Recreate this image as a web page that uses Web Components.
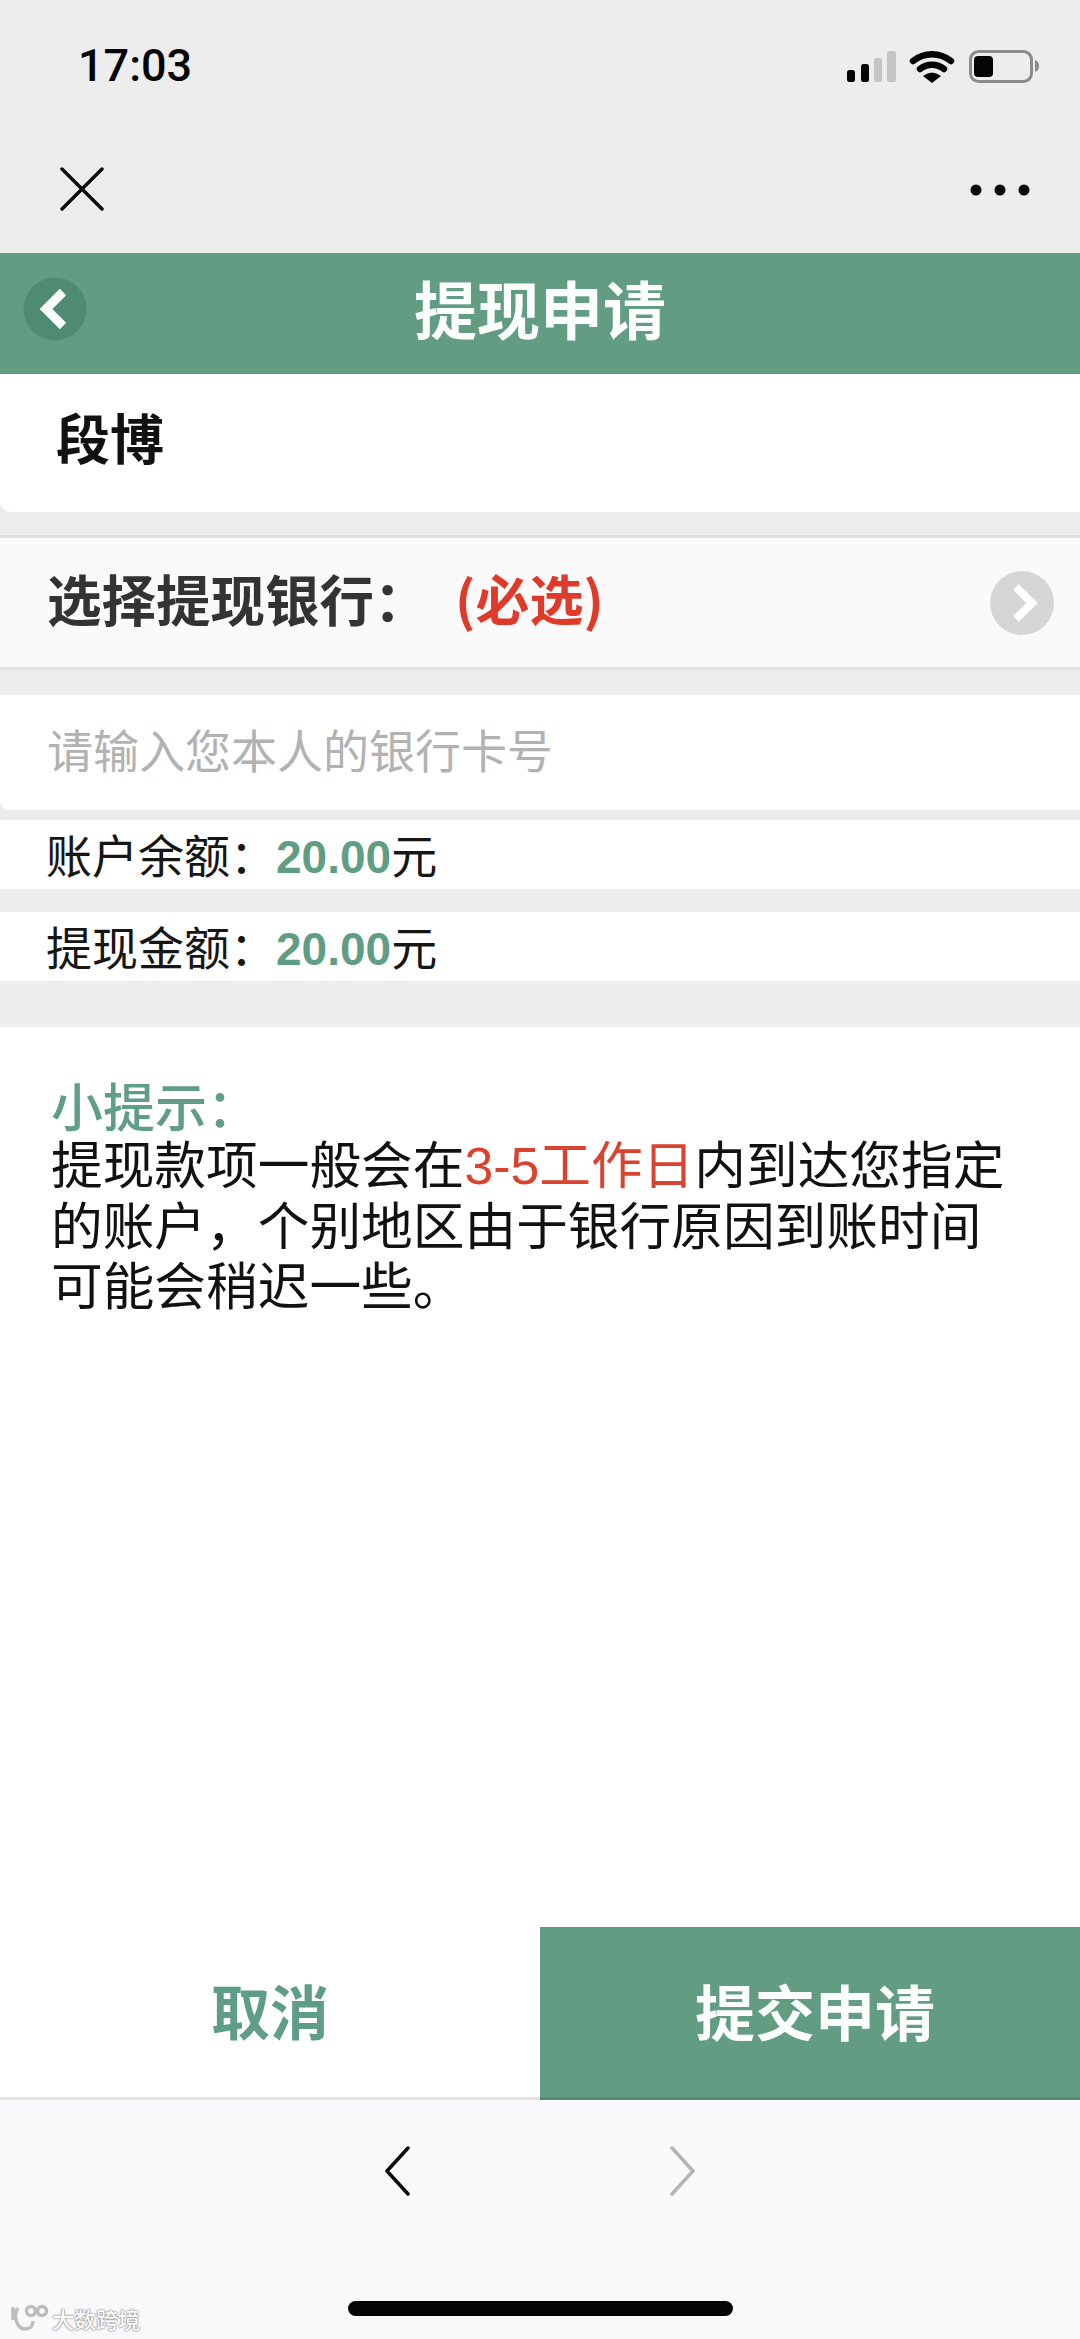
<!DOCTYPE html>
<html lang="zh">
<head>
<meta charset="utf-8">
<title>提现申请</title>
<style>
  html, body { margin: 0; padding: 0; }
  body {
    width: 1080px;
    height: 2339px;
    overflow: hidden;
    background: #ececec;
    font-family: "Liberation Sans", "Noto Sans CJK SC", sans-serif;
    display: flex;
    flex-direction: column;
  }
</style>
</head>
<body>
  <phone-status time="17:03"></phone-status>
  <wechat-nav></wechat-nav>
  <app-header>提现申请</app-header>
  <name-row>段博</name-row>
  <bank-select label="选择提现银行：" hint="(必选)"></bank-select>
  <card-input placeholder="请输入您本人的银行卡号"></card-input>
  <amount-row label="账户余额：" value="20.00" style="margin-top: 10px"></amount-row>
  <amount-row label="提现金额：" value="20.00" style="margin-top: 23px"></amount-row>
  <tip-box title="小提示：">提现款项一般会在<em>3-5工作日</em>内到达您指定的账户，个别地区由于银行原因到账时间可能会稍迟一些。</tip-box>
  <action-bar cancel="取消" submit="提交申请"></action-bar>
  <browser-bar></browser-bar>

<script>
// small helper so every element sets up its shadow root the same way
class BaseEl extends HTMLElement {
    constructor(html) {
        super();
        this.attachShadow({ mode: 'open' });
        const template = document.createElement('template');
        template.innerHTML = html;
        this.shadowRoot.appendChild(template.content.cloneNode(true));
    }
    attr(name, fallback) {
        return this.hasAttribute(name) ? this.getAttribute(name) : fallback;
    }
}

class PhoneStatus extends BaseEl {
    constructor() {
        super(`
            <style>
                :host { display: flex; height: 133px; background: #eeeded; justify-content: space-between; align-items: flex-start; padding: 0 40px 0 78px; box-sizing: border-box; }
                .time { font: 500 45px/45px Roboto, "Liberation Sans", sans-serif; color: #050505; margin-top: 43px; }
                svg { margin-top: 50px; display: block; }
            </style>
            <span class="time"></span>
            <svg width="195" height="33" viewBox="0 0 195 33">
                <rect x="2" y="20" width="8" height="12" rx="2.5" fill="#050505"/>
                <rect x="16" y="14" width="8" height="18" rx="2.5" fill="#050505"/>
                <rect x="29" y="8" width="8" height="24" rx="2" fill="#c4c4c4"/>
                <rect x="42" y="1" width="9" height="31" rx="2" fill="#c4c4c4"/>
                <path d="M68 11 A30 30 0 0 1 106 11" fill="none" stroke="#050505" stroke-width="6.5" stroke-linecap="round"/>
                <path d="M75 19 A19 19 0 0 1 99 19" fill="none" stroke="#050505" stroke-width="6.5" stroke-linecap="round"/>
                <path d="M78 26 Q87 19 96 26 L87 33 Z" fill="#050505"/>
                <rect x="125.500" y="1.500" width="61" height="30" rx="8" fill="none" stroke="#8b8b8b" stroke-width="3"/>
                <rect x="129" y="6" width="19" height="21" rx="4" fill="#050505"/>
                <path d="M190 10 C193 11 194 13 194 16 C194 19 193 21 190 22 Z" fill="#8b8b8b"/>
            </svg>
        `);
    }
    connectedCallback() {
        this.shadowRoot.querySelector('.time').textContent = this.attr('time', '');
    }
}

class WechatNav extends BaseEl {
    constructor() {
        super(`
            <style>
                :host { display: flex; height: 120px; background: #eeeded; justify-content: space-between; align-items: center; padding: 0 50px 8px 60px; box-sizing: border-box; }
                svg { display: block; }
                .more { margin-top: 2px; }
            </style>
            <svg width="44" height="44" viewBox="0 0 44 44">
                <path d="M2 2 L42 42 M42 2 L2 42" stroke="#0a0a0a" stroke-width="3.500" stroke-linecap="round"/>
            </svg>
            <svg class="more" width="60" height="12" viewBox="0 0 60 12" fill="#0a0a0a">
                <circle cx="6" cy="6" r="5.500"/><circle cx="30" cy="6" r="5.500"/><circle cx="54" cy="6" r="5.500"/>
            </svg>
        `);
    }
}

class AppHeader extends BaseEl {
    constructor() {
        super(`
            <style>
                :host { display: flex; height: 121px; background: #619c83; color: #fbfefc; align-items: center; justify-content: center; position: relative; }
                .title { font: 700 63px/121px "Noto Sans CJK SC", sans-serif; margin-top: -14px; }
                .back { position: absolute; left: 23px; top: 24px; width: 64px; height: 64px; display: block; }
            </style>
            <svg class="back" viewBox="0 0 64 64">
                <circle cx="32" cy="32" r="31.500" fill="#4f8a73"/>
                <path d="M40 15 L23 32 L40 49" fill="none" stroke="#fbfefc" stroke-width="9" stroke-linejoin="miter"/>
            </svg>
            <span class="title"><slot></slot></span>
        `);
    }
}

class NameRow extends BaseEl {
    constructor() {
        super(`
            <style>
                :host { display: block; height: 138px; background: #fff; padding-left: 56px; box-sizing: border-box; border-bottom-left-radius: 10px; font: 700 54px/125px "Noto Sans CJK SC", sans-serif; color: #111; }
            </style>
            <slot></slot>
        `);
    }
}

class BankSelect extends BaseEl {
    constructor() {
        super(`
            <style>
                :host { display: flex; align-items: center; height: 135px; margin-top: 23px; background: #fafafa; padding-left: 47px; padding-right: 26px; box-sizing: border-box;
                        border-top: 3px solid #dedede; border-bottom: 3px solid #e2e2e2; font: 700 54.500px/1 "Noto Sans CJK SC", sans-serif; color: #333; }
                .label { width: 408px; margin-top: -9px; }
                .hint { color: #e03a2a; flex: 1; margin-top: -9px; font-size: 54px; }
                svg { display: block; }
            </style>
            <span class="label"></span>
            <span class="hint"></span>
            <svg width="64" height="64" viewBox="0 0 64 64">
                <circle cx="32" cy="32" r="32" fill="#d6d6d6"/>
                <path d="M26 16 L42 32 L26 48" fill="none" stroke="#fff" stroke-width="8"/>
            </svg>
        `);
    }
    connectedCallback() {
        this.shadowRoot.querySelector('.label').textContent = this.attr('label', '');
        this.shadowRoot.querySelector('.hint').textContent = this.attr('hint', '');
    }
}

class CardInput extends BaseEl {
    constructor() {
        super(`
            <style>
                :host { display: block; height: 115px; margin-top: 25px; background: #fff; padding-left: 47px; box-sizing: border-box; border-bottom-left-radius: 10px; font: 400 46px/107px "Noto Sans CJK SC", sans-serif; color: #b2b2b2; }
            </style>
            <span class="ph"></span>
        `);
    }
    connectedCallback() {
        this.shadowRoot.querySelector('.ph').textContent = this.attr('placeholder', '');
    }
}

class AmountRow extends BaseEl {
    constructor() {
        super(`
            <style>
                :host { display: block; height: 69px; background: #fff; padding-left: 46px; font: 400 46px/67px "Noto Sans CJK SC", sans-serif; color: #161616; white-space: nowrap; }
                b { font: 700 46px/67px "Liberation Sans", sans-serif; color: #5f9e85; }
            </style>
            <span class="label"></span><b></b>元
        `);
    }
    connectedCallback() {
        this.shadowRoot.querySelector('.label').textContent = this.attr('label', '');
        this.shadowRoot.querySelector('b').textContent = this.attr('value', '');
    }
}

class TipBox extends BaseEl {
    constructor() {
        super(`
            <style>
                :host { display: block; flex: 1; margin-top: 46px; padding: 46px 66px 0 51px; background: #fff; font: 400 51.700px/60.500px "Liberation Sans", "Noto Sans CJK SC", sans-serif; color: #111; }
                .title { color: #5f9e85; font: 500 52px/63px "Noto Sans CJK SC", sans-serif; height: 63px; }
                ::slotted(em) { font-style: normal; color: #d9432f; }
            </style>
            <div class="title"></div>
            <div><slot></slot></div>
        `);
    }
    connectedCallback() {
        this.shadowRoot.querySelector('.title').textContent = this.attr('title', '');
    }
}

class ActionBar extends BaseEl {
    constructor() {
        super(`
            <style>
                :host { display: grid; grid-template-columns: 540px 540px; height: 173px; font: 700 59px/166px "Noto Sans CJK SC", sans-serif; text-align: center; }
                .cancel { color: #5f9e85; background: #fff; border-bottom: 3px solid #e3e3e3; }
                .submit { color: #fbfefc; background: #619c83; border-bottom: 3px solid #568a74; padding-left: 10px; font-size: 60px; }
            </style>
            <div class="cancel"></div>
            <div class="submit"></div>
        `);
    }
    connectedCallback() {
        this.shadowRoot.querySelector('.cancel').textContent = this.attr('cancel', '');
        this.shadowRoot.querySelector('.submit').textContent = this.attr('submit', '');
    }
}

class BrowserBar extends BaseEl {
    constructor() {
        super(`
            <style>
                :host { display: flex; height: 239px; background: #f9f8fb; position: relative; justify-content: center; padding-top: 46px; box-sizing: border-box; gap: 260px; }
                svg.nav { display: block; }
                .home { position: absolute; left: 348px; top: 201px; width: 385px; height: 15px; border-radius: 8px; background: #050505; }
                .mark { position: absolute; left: 10px; top: 204px; display: flex; align-items: center; gap: 2px; color: #fff; font: 500 22px/28px "Noto Sans CJK SC", sans-serif; text-shadow: 0 0 2px #6f6f6f, 0 0 1px #6f6f6f; }
                .mark svg { display: block; }
            </style>
            <svg class="nav" width="26" height="50" viewBox="0 0 26 50">
                <path d="M24 2 L3 25 L24 48" fill="none" stroke="#0a0a0a" stroke-width="3.500" stroke-linecap="round" stroke-linejoin="round"/>
            </svg>
            <svg class="nav" width="26" height="50" viewBox="0 0 26 50">
                <path d="M2 2 L23 25 L2 48" fill="none" stroke="#b4b4b4" stroke-width="3.500" stroke-linecap="round" stroke-linejoin="round"/>
            </svg>
            <div class="mark">
                <svg width="40" height="28" viewBox="0 0 40 28" fill="none" stroke="#bdbdbd" stroke-width="3.500">
                    <path d="M3 3 V16 M8 4 C3 10 6 25 15 25 C21 25 23 21 23 17"/>
                    <circle cx="21" cy="7" r="4.500"/><circle cx="32" cy="7" r="4.500"/>
                </svg>
                <span>大数跨境</span>
            </div>
            <div class="home"></div>
        `);
    }
}

customElements.define('phone-status', PhoneStatus);
customElements.define('wechat-nav', WechatNav);
customElements.define('app-header', AppHeader);
customElements.define('name-row', NameRow);
customElements.define('bank-select', BankSelect);
customElements.define('card-input', CardInput);
customElements.define('amount-row', AmountRow);
customElements.define('tip-box', TipBox);
customElements.define('action-bar', ActionBar);
customElements.define('browser-bar', BrowserBar);
</script>
</body>
</html>
